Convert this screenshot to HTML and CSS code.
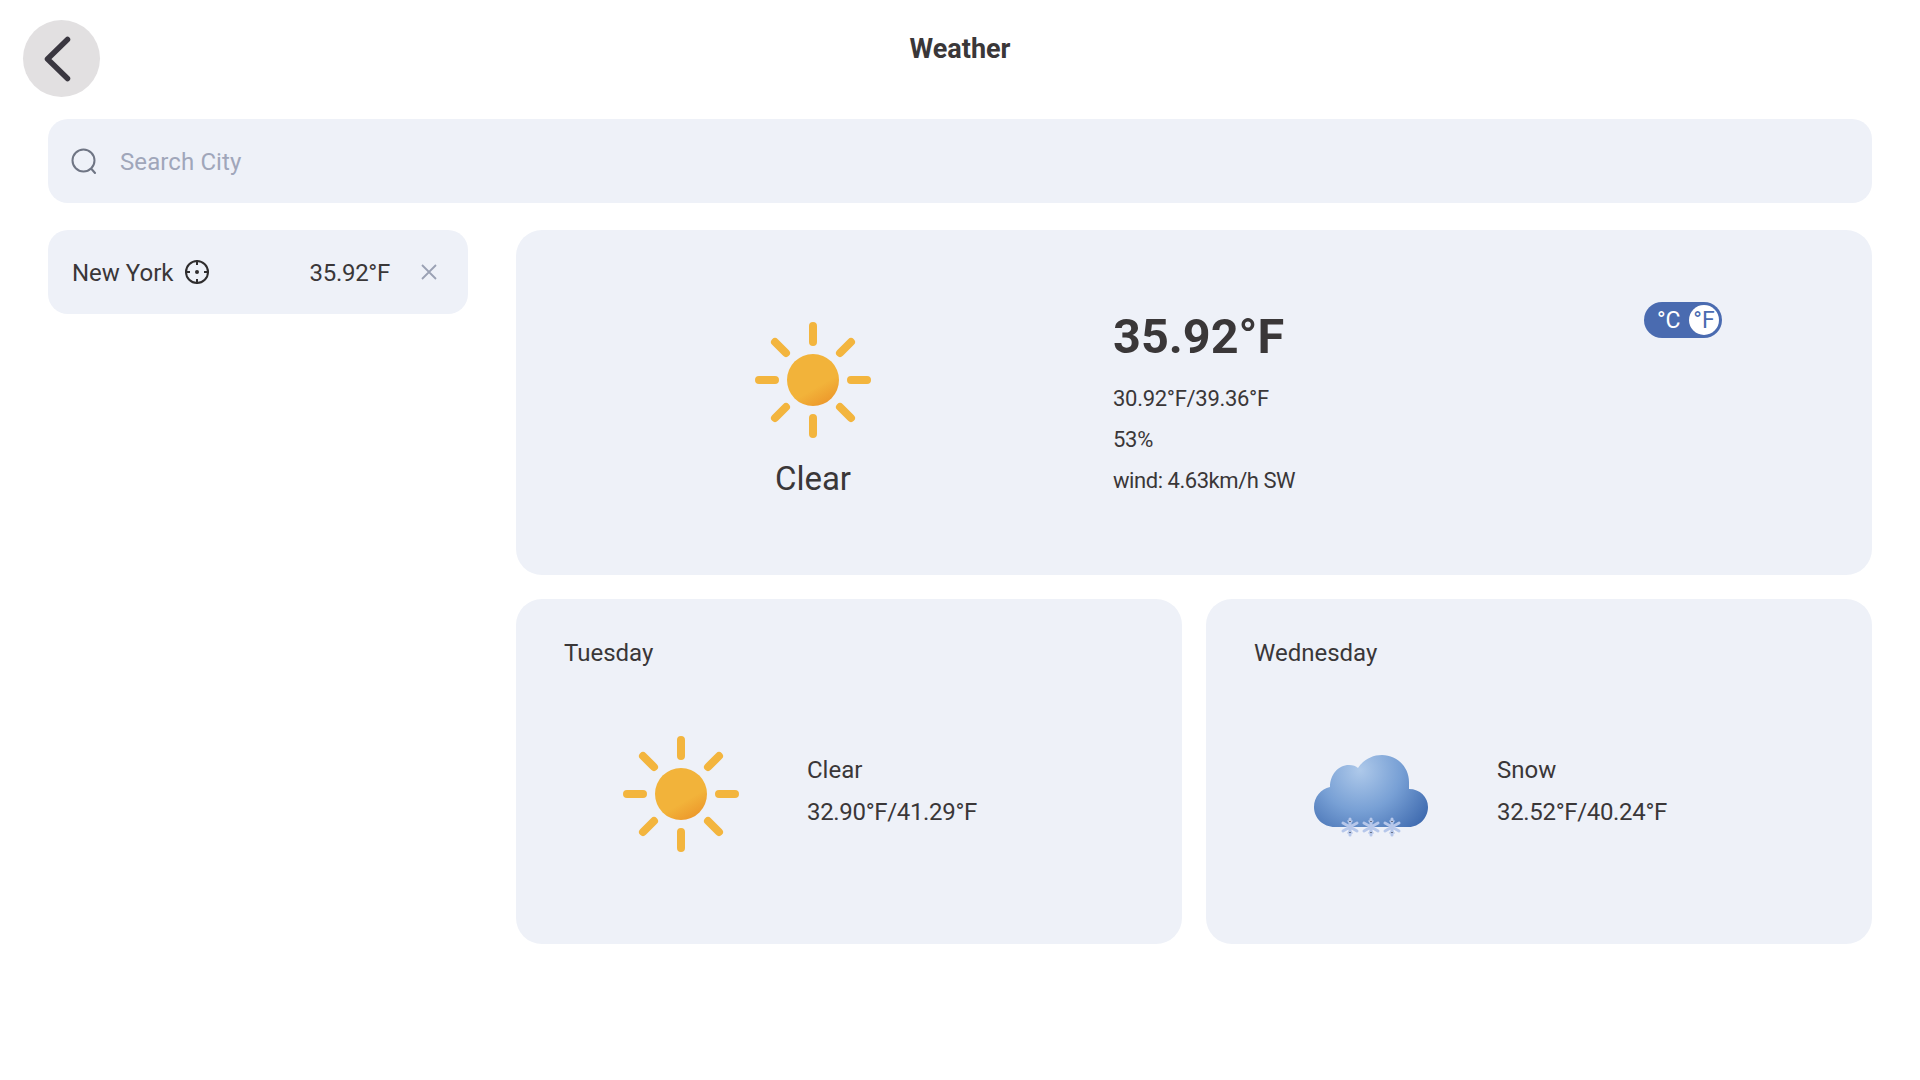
FILE: index.html
```html
<!doctype html>
<html lang="en">
    <head>
        <meta charset="UTF-8" />
        <title>Weather</title>
        <link rel="stylesheet" href="styles.css">
    </head>
    <body>
        <svg class="defs" width="0" height="0">
            <defs>
                <linearGradient id="sunFill" x1="0.35" y1="0.3" x2="0.75" y2="1">
                    <stop offset="0.5" stop-color="#f2b33a" />
                    <stop offset="1" stop-color="#ec962a" />
                </linearGradient>
                <radialGradient id="cloudFill" gradientUnits="userSpaceOnUse" cx="47" cy="34" r="82">
                    <stop offset="0" stop-color="#aec9ea" />
                    <stop offset="0.5" stop-color="#78a0d5" />
                    <stop offset="1" stop-color="#3d69ae" />
                </radialGradient>
                <g id="sun">
                    <circle cx="58" cy="58" r="26" fill="url(#sunFill)" />
                    <g stroke="#f3b53e" stroke-width="8" stroke-linecap="round">
                        <path d="M58 4V20M58 96V112M4 58H20M96 58H112" />
                        <path d="M20 20L31 31M96 20L85 31M20 96L31 85M96 96L85 85" />
                    </g>
                </g>
                <g id="flake" stroke="#b6c7ea" stroke-width="3" stroke-linecap="round">
                    <path d="M0 -8V8M-7 -4L7 4M-7 4L7 -4" />
                    <path d="M-2 -6L0 -4L2 -6M-2 6L0 4L2 6" stroke-width="1.6" />
                </g>
            </defs>
        </svg>

        <header class="topbar">
            <button class="back-btn">
                <svg width="28" height="46" viewBox="0 0 28 46">
                    <path d="M23.5 3.5L3.5 23L23.5 42.5" fill="none" stroke="#3a3740" stroke-width="5.5" stroke-linecap="round" stroke-linejoin="round" />
                </svg>
            </button>
            <h1 class="title">Weather</h1>
        </header>

        <div class="search">
            <svg width="26" height="26" viewBox="0 0 26 26">
                <circle cx="12.5" cy="12.5" r="11" fill="none" stroke="#6f7584" stroke-width="2" />
                <path d="M20.5 21L24 25" fill="none" stroke="#6f7584" stroke-width="2" stroke-linecap="round" />
            </svg>
            <span class="search-text">Search City</span>
        </div>

        <div class="content">
            <aside class="sidebar">
                <div class="city">
                    <span class="city-name">New York</span>
                    <svg class="locate" width="26" height="26" viewBox="0 0 26 26">
                        <circle cx="13" cy="13" r="11" fill="none" stroke="#2f2d2e" stroke-width="2" />
                        <path d="M13 1V6M13 20V25M1 13H6M20 13H25" stroke="#2f2d2e" stroke-width="2" />
                        <circle cx="13" cy="13" r="2" fill="#2f2d2e" />
                    </svg>
                    <span class="city-temp">35.92°F</span>
                    <svg class="close" width="16" height="16" viewBox="0 0 16 16">
                        <path d="M1 1L15 15M15 1L1 15" stroke="#9aa1b4" stroke-width="1.8" />
                    </svg>
                </div>
            </aside>

            <main class="panels">
                <section class="card today">
                    <div class="today-icon">
                        <svg width="116" height="116" viewBox="0 0 116 116"><use href="#sun" /></svg>
                        <div class="today-label">Clear</div>
                    </div>
                    <div class="today-info">
                        <div class="today-temp">35.92°F</div>
                        <div class="today-line">30.92°F/39.36°F</div>
                        <div class="today-line">53%</div>
                        <div class="today-line today-wind">wind: 4.63km/h SW</div>
                    </div>
                    <div class="unit-toggle">
                        <span class="unit-c">°C</span>
                        <span class="unit-f">°F</span>
                    </div>
                </section>

                <div class="forecast">
                    <section class="card day">
                        <div class="day-name">Tuesday</div>
                        <div class="day-body">
                            <svg width="116" height="116" viewBox="0 0 116 116"><use href="#sun" /></svg>
                            <div class="day-info">
                                <div>Clear</div>
                                <div class="day-range">32.90°F/41.29°F</div>
                            </div>
                        </div>
                    </section>
                    <section class="card day">
                        <div class="day-name">Wednesday</div>
                        <div class="day-body">
                            <svg width="116" height="116" viewBox="0 0 116 116">
                                <path d="M22 91C10 91 1 82 1 71C1 61 8 53 17 51C17 39 25 29 36 29C40 29 43 30 45 32C50 24 59 19 69 19C84 19 96 31 96 46L96 53C107 53 115 61 115 71C115 82 106 91 96 91Z" fill="url(#cloudFill)" />
                                <use href="#flake" x="37" y="91" />
                                <use href="#flake" x="58" y="91" />
                                <use href="#flake" x="79" y="91" />
                            </svg>
                            <div class="day-info">
                                <div>Snow</div>
                                <div class="day-range">32.52°F/40.24°F</div>
                            </div>
                        </div>
                    </section>
                </div>
            </main>
        </div>
    </body>
</html>
```

FILE: styles.css
```css
* {
    box-sizing: border-box;
}

body {
    margin: 0;
    height: 1080px;
    overflow: hidden;
    background: #fff;
    color: #3a3738;
    font-family: Roboto, sans-serif;
}

.defs {
    display: block;
    height: 0;
}

.topbar {
    display: flex;
    justify-content: center;
    height: 119px;
    position: relative;
}

.back-btn {
    position: absolute;
    left: 23px;
    top: 20px;
    width: 77px;
    height: 77px;
    padding: 0 7px 0 0;
    border: none;
    border-radius: 50%;
    background: #e2e0e1;
    display: flex;
    align-items: center;
    justify-content: center;
}

.title {
    margin: 32px 0 0;
    font-size: 27px;
    line-height: 34px;
    font-weight: 700;
}

.search {
    display: flex;
    align-items: center;
    gap: 23px;
    height: 84px;
    margin: 0 48px;
    padding: 0 23px;
    background: #eef1f8;
    border-radius: 20px;
    font-size: 24px;
    color: #a0a6ba;
}

.search-text {
    padding-top: 2px;
    letter-spacing: 0.1px;
}

.content {
    display: flex;
    gap: 48px;
    margin: 27px 48px 0;
}

.sidebar {
    width: 420px;
    flex: none;
}

.city {
    display: flex;
    align-items: center;
    height: 84px;
    padding: 0 31px 0 24px;
    background: #eef1f8;
    border-radius: 20px;
    font-size: 24px;
}

.city-name,
.city-temp {
    padding-top: 2px;
}

.locate {
    margin-left: 11px;
}

.city-temp {
    margin-left: auto;
    letter-spacing: -0.3px;
}

.close {
    margin-left: 31px;
}

.panels {
    flex: 1;
    display: flex;
    flex-direction: column;
    gap: 24px;
}

.card {
    height: 345px;
    background: #eef1f8;
    border-radius: 26px;
}

.today {
    display: flex;
    align-items: flex-start;
    position: relative;
    padding: 92px 0 0 239px;
}

.today-icon {
    width: 116px;
    display: flex;
    flex-direction: column;
    align-items: center;
}

.today-label {
    margin-top: 21px;
    font-size: 33px;
    line-height: 40px;
}

.today-info {
    margin: -13px 0 0 242px;
}

.today-temp {
    font-size: 48.6px;
    line-height: 56px;
    font-weight: 700;
    margin-bottom: 13px;
}

.today-line {
    font-size: 22px;
    line-height: 41px;
    letter-spacing: -0.3px;
}

.today-wind {
    letter-spacing: -0.45px;
}

.unit-toggle {
    position: absolute;
    left: 1128px;
    top: 72px;
    width: 78px;
    height: 36px;
    padding: 3px;
    display: flex;
    align-items: center;
    justify-content: space-between;
    background: #4a6bb0;
    border-radius: 18px;
    font-size: 23px;
    color: #fff;
}

.unit-c {
    margin-left: 10px;
    padding-top: 1px;
}

.unit-f {
    width: 30px;
    height: 30px;
    line-height: 32px;
    text-align: center;
    background: #fff;
    border-radius: 50%;
    color: #4a6bb0;
}

.forecast {
    display: flex;
    gap: 24px;
}

.day {
    flex: 1;
    padding: 40px 48px;
}

.day-name {
    font-size: 24px;
    line-height: 28px;
}

.day-body {
    display: flex;
    align-items: center;
    gap: 68px;
    margin: 69px 0 0 59px;
}

.day-info {
    font-size: 24px;
    line-height: 42px;
    padding-bottom: 6px;
}

.day-range {
    letter-spacing: -0.33px;
}
```
